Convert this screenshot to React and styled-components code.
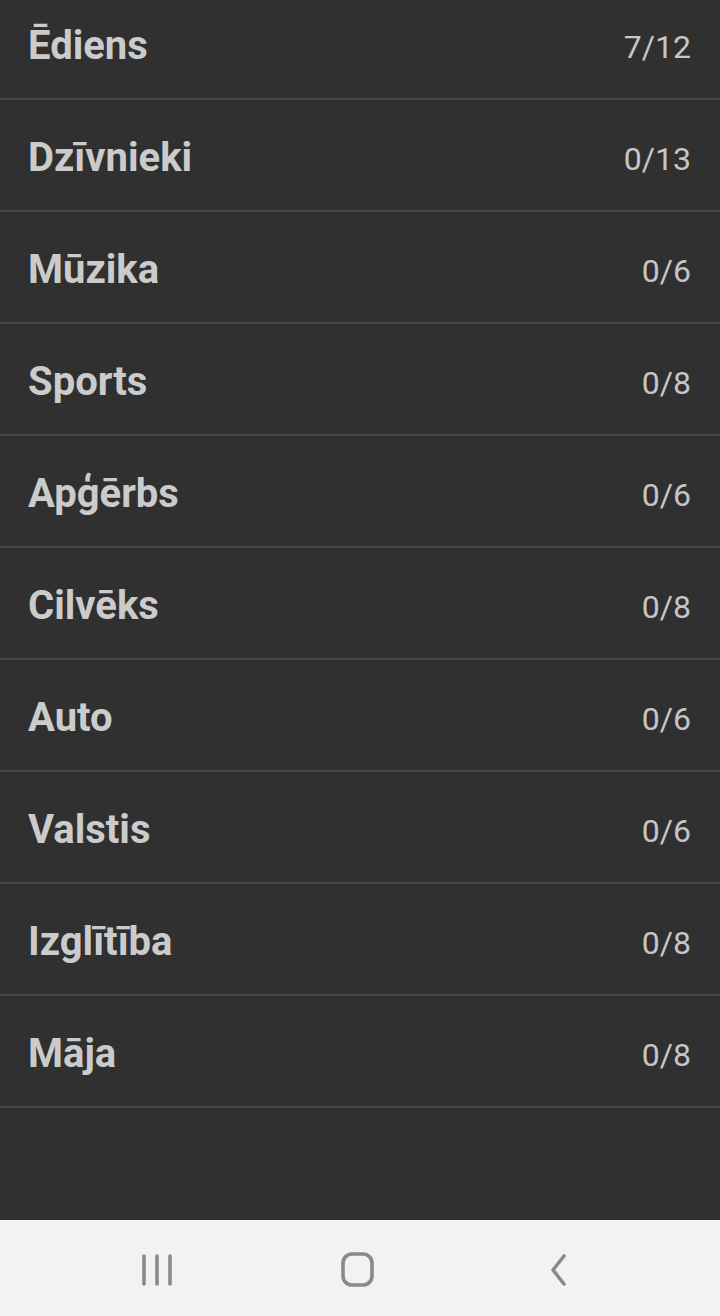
import React from "react";
import styled, { createGlobalStyle } from "styled-components";

const Global = createGlobalStyle`
  html, body {
    margin: 0;
    padding: 0;
    background: #303030;
    font-family: Roboto, "Noto Sans", sans-serif;
  }
`;

const Screen = styled.div`
  width: 720px;
  height: 1316px;
  display: flex;
  flex-direction: column;
  overflow: hidden;
  background: #303030;
`;

const List = styled.ul`
  flex: 1;
  list-style: none;
  margin: -12px 0 0;
  padding: 0;
`;

const Row = styled.li`
  height: 110px;
  border-bottom: 2px solid #474747;
  display: flex;
  align-items: center;
  justify-content: space-between;
  padding: 0 29px 0 28px;
`;

const Title = styled.span`
  font-size: 40px;
  font-weight: 700;
  color: #cbcbcb;
  margin-top: 4px;
`;

const Count = styled.span`
  font-size: 32px;
  font-weight: 400;
  color: #c6c6c6;
  margin-top: 8px;
`;

const NavBar = styled.nav`
  height: 96px;
  flex-shrink: 0;
  background: #f2f2f2;
  display: flex;
  align-items: center;
  justify-content: center;
  padding: 4px 4px 0 0;
  box-sizing: border-box;
`;

const NavButton = styled.button`
  border: none;
  background: none;
  padding: 0;
  width: 201px;
  height: 40px;
  display: flex;
  align-items: center;
  justify-content: center;
  color: #8a8a8a;
`;

const categories = [
  ["Ēdiens", "7/12"],
  ["Dzīvnieki", "0/13"],
  ["Mūzika", "0/6"],
  ["Sports", "0/8"],
  ["Apģērbs", "0/6"],
  ["Cilvēks", "0/8"],
  ["Auto", "0/6"],
  ["Valstis", "0/6"],
  ["Izglītība", "0/8"],
  ["Māja", "0/8"],
];

export default function App() {
  return (
    <Screen>
      <Global />
      <List>
        {categories.map(([name, count]) => (
          <Row key={name}>
            <Title>{name}</Title>
            <Count>{count}</Count>
          </Row>
        ))}
      </List>
      <NavBar>
        <NavButton aria-label="Recent apps">
          <svg width="34" height="34" viewBox="0 0 34 34" fill="none" stroke="currentColor" strokeWidth="3.6" strokeLinecap="round">
            <path d="M4 3v28M17 3v28M30 3v28" />
          </svg>
        </NavButton>
        <NavButton aria-label="Home">
          <svg width="36" height="36" viewBox="0 0 36 36" fill="none" stroke="currentColor" strokeWidth="3.6">
            <rect x="3" y="2" width="29" height="31" rx="9" />
          </svg>
        </NavButton>
        <NavButton aria-label="Back">
          <svg width="34" height="34" viewBox="0 0 34 34" fill="none" stroke="currentColor" strokeWidth="3.6" strokeLinecap="round" strokeLinejoin="round">
            <path d="M22 3L11 17l11 14" />
          </svg>
        </NavButton>
      </NavBar>
    </Screen>
  );
}
